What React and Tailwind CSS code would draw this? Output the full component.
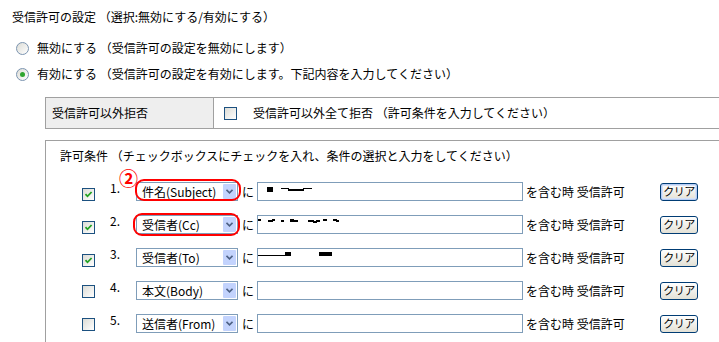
import React from "react";

const font = { fontFamily: '"Noto Sans CJK JP", "Noto Sans", sans-serif' };

function Radio({ checked }) {
  return (
    <span className="relative inline-flex h-[13px] w-[13px] shrink-0 items-center justify-center rounded-full border border-[#7b94b0] bg-gradient-to-br from-[#dcdcd6] to-white">
      {checked && <span className="h-[5px] w-[5px] rounded-full bg-[#2fa52f]" />}
    </span>
  );
}

function Check({ checked }) {
  return (
    <span className="inline-flex h-[13px] w-[13px] shrink-0 items-center justify-center border border-[#1c5180] bg-gradient-to-br from-[#dcdcd6] to-white">
      {checked && (
        <svg width="9" height="9" viewBox="0 0 9 9">
          <path d="M1.5 4.2 L3.5 6.3 L7.6 2" fill="none" stroke="#21a121" strokeWidth="1.8" />
        </svg>
      )}
    </span>
  );
}

function Select({ label }) {
  return (
    <div className="flex h-[19px] w-[102px] shrink-0 items-center justify-between border border-[#7f9db9] bg-white pl-[5px] pr-[1px]">
      <span className="whitespace-nowrap text-[12px] leading-none">{label}</span>
      <span className="flex h-[15px] w-[13px] items-center justify-center rounded-[1px] bg-[#c3d3fd]">
        <svg width="7" height="5" viewBox="0 0 7 5">
          <path d="M0.5 0.8 L3.5 3.8 L6.5 0.8" fill="none" stroke="#4d6185" strokeWidth="1.6" />
        </svg>
      </span>
    </div>
  );
}

function Marks({ kind }) {
  if (kind === "r1")
    return (
      <svg width="80" height="17" viewBox="0 0 80 17">
        <rect x="9" y="4" width="6" height="5" fill="#000" />
        <rect x="23" y="5" width="8" height="1" fill="#000" />
        <rect x="30" y="6" width="16" height="2" fill="#000" />
        <rect x="45" y="5" width="9" height="1" fill="#000" />
      </svg>
    );
  if (kind === "r2")
    return (
      <svg width="110" height="17" viewBox="0 0 110 17">
        <rect x="0" y="3" width="3" height="2" fill="#000" />
        <rect x="10" y="4" width="5" height="2" fill="#000" />
        <rect x="14" y="3" width="3" height="2" fill="#000" />
        <rect x="23" y="4" width="3" height="2" fill="#000" />
        <rect x="32" y="3" width="4" height="3" fill="#000" />
        <rect x="35" y="4" width="5" height="2" fill="#000" />
        <rect x="50" y="4" width="6" height="2" fill="#000" />
        <rect x="55" y="5" width="4" height="2" fill="#000" />
        <rect x="58" y="4" width="4" height="2" fill="#000" />
        <rect x="65" y="3" width="4" height="2" fill="#000" />
        <rect x="75" y="3" width="4" height="2" fill="#000" />
        <rect x="78" y="4" width="3" height="2" fill="#000" />
      </svg>
    );
  if (kind === "r3")
    return (
      <svg width="90" height="17" viewBox="0 0 90 17">
        <rect x="0" y="6" width="28" height="1" fill="#000" />
        <rect x="27" y="3" width="6" height="4" fill="#000" />
        <rect x="61" y="3" width="13" height="4" fill="#000" />
      </svg>
    );
  return null;
}

const rows = [
  { n: "1.", label: "件名(Subject)", checked: true, marks: "r1", oval: true, circle: true, focus: true },
  { n: "2.", label: "受信者(Cc)", checked: true, marks: "r2", oval: true },
  { n: "3.", label: "受信者(To)", checked: true, marks: "r3" },
  { n: "4.", label: "本文(Body)", checked: false },
  { n: "5.", label: "送信者(From)", checked: false },
];

function Row({ r }) {
  return (
    <div className="relative flex h-[33px] items-center">
      <div className="ml-[36px]">
        <Check checked={r.checked} />
      </div>
      <span className="ml-[15px] w-[26px] self-start pt-[6px] text-[12px] leading-[14px]">{r.n}</span>
      <div className="relative">
        <Select label={r.label} />
        {r.oval && (
          <span
            className={
              r.circle
                ? "pointer-events-none absolute left-[-1px] top-[-3px] h-[22px] w-[106px] rounded-[9px] border-2 border-[#ff0000]"
                : "pointer-events-none absolute left-[-3px] top-[-2px] h-[23px] w-[107px] rounded-[9px] border-2 border-[#ff0000]"
            }
          />
        )}
        {r.circle && (
          <span className="absolute left-[-17px] top-[-14px] text-[19px] font-bold leading-none text-[#ff0000]">②</span>
        )}
      </div>
      <span className="ml-[4px] w-[15px] text-[12px] leading-none">に</span>
      <div className="flex h-[19px] w-[266px] items-center overflow-hidden border border-[#7f9db9] bg-white">
        {r.marks && <Marks kind={r.marks} />}
      </div>
      <span className="ml-[3px] w-[134px] whitespace-nowrap text-[12px] leading-none">を含む時 受信許可</span>
      <span
        className={
          "flex h-[18px] w-[38px] items-center justify-center whitespace-nowrap rounded-[3px] border border-[#003c74] bg-gradient-to-b from-white to-[#e3e1d6] text-[11px] leading-none tracking-[-0.5px]" +
          (r.focus ? " shadow-[inset_0_0_0_1px_#b6cdf5,inset_0_0_0_2px_#d6e2f8]" : "")
        }
      >
        クリア
      </span>
    </div>
  );
}

export default function App() {
  return (
    <div className="h-[342px] w-[719px] overflow-hidden bg-white text-black" style={font}>
      <div className="ml-[12px] mt-[9px] h-[16px] text-[12px] leading-[16px]">受信許可の設定 （選択:無効にする/有効にする）</div>
      <div className="ml-[16px] mt-[10px] flex h-[26px] items-center">
        <Radio checked={false} />
        <span className="ml-[8px] text-[12px] leading-none">無効にする （受信許可の設定を無効にします）</span>
      </div>
      <div className="ml-[16px] flex h-[26px] items-center">
        <Radio checked={true} />
        <span className="ml-[8px] text-[12px] leading-none">有効にする （受信許可の設定を有効にします。下記内容を入力してください）</span>
      </div>
      <div className="ml-[45px] mt-[10px] flex h-[32px] w-[700px] border border-[#a0a0a0]">
        <div className="flex w-[168px] items-center border-r border-[#a0a0a0] bg-[#eeeeee] pl-[6px] text-[12px] leading-none">
          受信許可以外拒否
        </div>
        <div className="flex items-center pl-[10px]">
          <Check checked={false} />
          <span className="ml-[16px] text-[12px] leading-none">受信許可以外全て拒否 （許可条件を入力してください）</span>
        </div>
      </div>
      <div className="ml-[45px] mt-[11px] w-[700px] border border-[#a0a0a0] pb-[20px]">
        <div className="ml-[14px] mt-[7px] h-[16px] text-[12px] leading-[16px]">
          許可条件 （チェックボックスにチェックを入れ、条件の選択と入力をしてください）
        </div>
        <div className="mt-[11px]">
          {rows.map((r) => (
            <Row key={r.n} r={r} />
          ))}
        </div>
      </div>
    </div>
  );
}
